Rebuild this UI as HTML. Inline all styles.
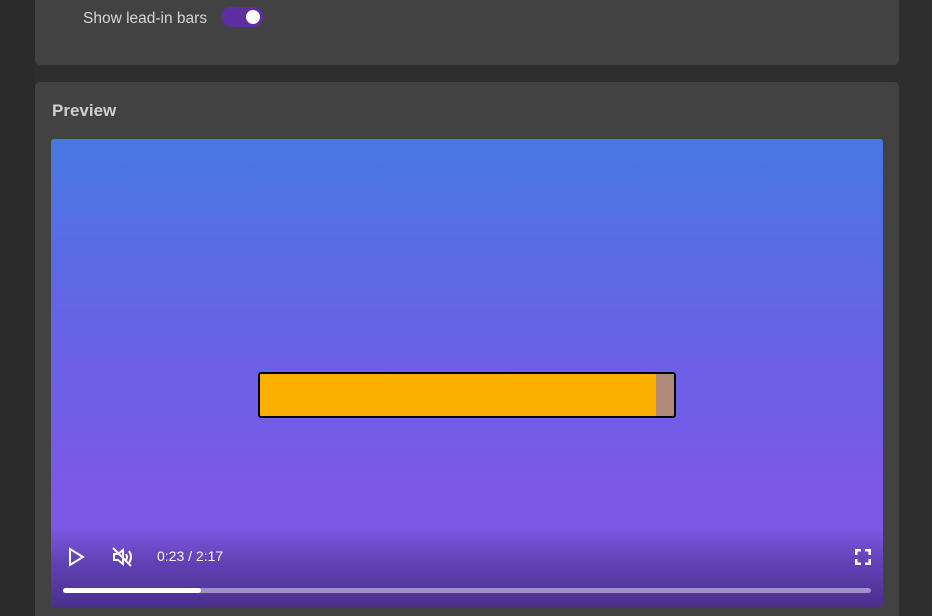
<!DOCTYPE html>
<html><head><style>
html,body{margin:0;padding:0;width:932px;height:616px;overflow:hidden;background:#2e2e2e;font-family:"Liberation Sans",sans-serif;}
.card{position:absolute;left:35px;width:864px;background:#424242;border-radius:5px;}
.vid{position:absolute;left:51px;top:139px;width:832px;height:468px;border-radius:3px;overflow:hidden;background:linear-gradient(#4878e2 0%,#6a61e6 45%,#7d58e6 78%,#7d58e6 100%);}
.shade{position:absolute;left:0;right:0;bottom:0;height:80px;background:linear-gradient(rgba(40,20,80,0) 0%,rgba(40,20,80,.3) 40%,rgba(40,20,80,.6) 100%);}
</style></head><body>
<div style="position:absolute;left:0;top:0;width:35px;height:616px;background:#2a2a2a"></div>
<div class="card" style="top:-10px;height:75px"></div>
<div style="position:absolute;left:83px;top:10px;color:#d6d6d6;font-size:15.5px;">Show lead-in bars</div>
<div style="position:absolute;left:221px;top:7px;width:42px;height:20px;border-radius:10px;background:#5e2ea0"></div>
<div style="position:absolute;left:246px;top:10px;width:14px;height:14px;border-radius:7px;background:#fff"></div>
<div class="card" style="top:82px;height:534px;border-radius:5px 5px 0 0"></div>
<div style="position:absolute;left:52px;top:101px;color:#d0d0d0;font-size:17px;font-weight:bold">Preview</div>
<div class="vid">
 <div style="position:absolute;left:207px;top:233px;width:414px;height:42px;border:2px solid #000;border-radius:3px;background:#b08a76;overflow:hidden"><div style="width:396px;height:100%;background:#fbb000"></div></div>
 <div class="shade"></div>
 <svg style="position:absolute;left:16px;top:408px" width="20" height="20" viewBox="0 0 20 20"><path d="M3 2 L16 10 L3 18 Z" fill="none" stroke="#fff" stroke-width="2"/></svg>
 <svg style="position:absolute;left:60px;top:407px" width="22" height="22" viewBox="0 0 22 22" fill="none" stroke="#fff" stroke-width="2"><path d="M3 8h4l5-4v14l-5-4H3z"/><path d="M15 8q2 3 0 6M18 5q4 6 0 12"/><path d="M2 2l18 18"/></svg>
 <div style="position:absolute;left:106px;top:409px;color:#fff;font-size:14px">0:23 / 2:17</div>
 <svg style="position:absolute;left:804px;top:410px" width="16" height="16" viewBox="0 0 16 16" fill="none" stroke="#fff" stroke-width="3"><path d="M1 6V1h5M10 1h5v5M15 10v5h-5M6 15H1v-5"/></svg>
 <div style="position:absolute;left:12px;top:449px;width:808px;height:5px;border-radius:3px;background:rgba(255,255,255,.45)"></div>
 <div style="position:absolute;left:12px;top:449px;width:138px;height:5px;border-radius:3px;background:#fff"></div>
</div>
</body></html>
